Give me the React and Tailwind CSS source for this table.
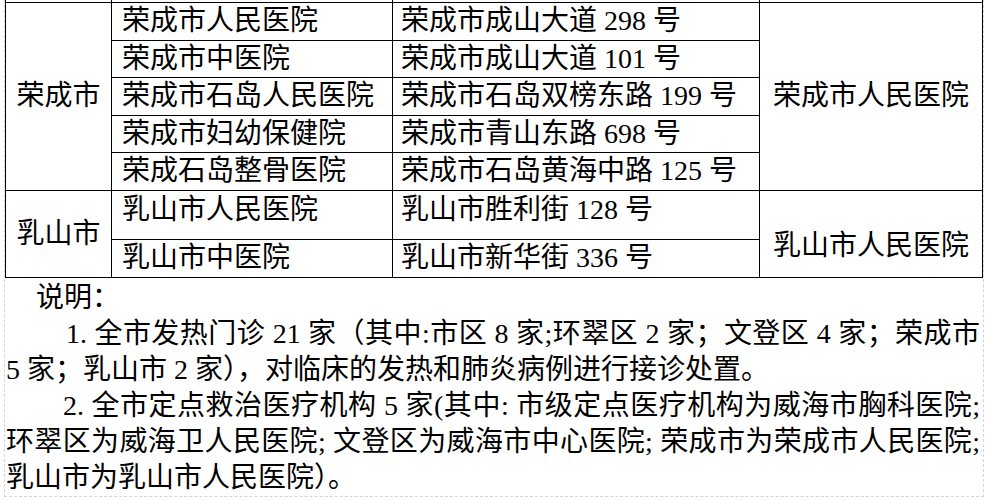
import React from 'react'

const font = { fontFamily: '"Liberation Serif", "Noto Sans CJK SC", serif' }

const rongcheng = [
  ['荣成市人民医院', '荣成市成山大道 298 号', 'h-[38px]'],
  ['荣成市中医院', '荣成市成山大道 101 号', 'h-[37px]'],
  ['荣成市石岛人民医院', '荣成市石岛双榜东路 199 号', 'h-[38px]'],
  ['荣成市妇幼保健院', '荣成市青山东路 698 号', 'h-[37px]'],
  ['荣成石岛整骨医院', '荣成市石岛黄海中路 125 号', 'h-[38px]'],
]

const cell = 'border border-black p-0 leading-[30px]'

export default function App() {
  return (
    <div className="bg-white w-[985px] h-[501px] overflow-hidden text-black" style={font}>
      <div className="ml-[4px] w-[980px] h-[497px] border-l border-r border-b border-dashed border-gray-300 text-[28px]">
        <table className="table-fixed border-collapse w-[977px]">
          <colgroup>
            <col className="w-[106px]" />
            <col className="w-[281px]" />
            <col className="w-[367px]" />
            <col className="w-[223px]" />
          </colgroup>
          <tbody>
            {/* clipped row from above */}
            <tr className="h-[2px]">
              <td className="border-x border-black p-0 h-[2px]"></td>
              <td className="border-x border-black p-0 h-[2px]"></td>
              <td className="border-x border-black p-0 h-[2px]"></td>
              <td className="border-x border-black p-0 h-[2px]"></td>
            </tr>
            {rongcheng.map(([name, addr, h], i) => (
              <tr key={name} className={h}>
                {i === 0 && (
                  <td rowSpan={5} className={`${cell} text-center align-middle`}>荣成市</td>
                )}
                <td className={`${cell} pl-[10px] align-middle whitespace-nowrap`}>{name}</td>
                <td className={`${cell} pl-[8px] align-middle whitespace-nowrap`}>{addr}</td>
                {i === 0 && (
                  <td rowSpan={5} className={`${cell} text-center align-middle whitespace-nowrap`}>荣成市人民医院</td>
                )}
              </tr>
            ))}
            <tr className="h-[49px]">
              <td rowSpan={2} className={`${cell} text-center align-middle`}>乳山市</td>
              <td className={`${cell} pl-[10px] pt-[4px] align-top whitespace-nowrap`}>乳山市人民医院</td>
              <td className={`${cell} pl-[8px] pt-[4px] align-top whitespace-nowrap`}>乳山市胜利街 128 号</td>
              <td rowSpan={2} className={`${cell} text-center pt-[40px] align-top whitespace-nowrap`}>乳山市人民医院</td>
            </tr>
            <tr className="h-[38px]">
              <td className={`${cell} pl-[10px] align-middle whitespace-nowrap`}>乳山市中医院</td>
              <td className={`${cell} pl-[8px] align-middle whitespace-nowrap`}>乳山市新华街 336 号</td>
            </tr>
          </tbody>
        </table>

        {/* notes */}
        <div className="mt-[2px] pl-[1px] w-[975px] leading-[36px] whitespace-nowrap">
          <div className="pl-[30px]">说明：</div>
          <div className="pl-[60px] text-justify [text-align-last:justify]">
            1. 全市发热门诊 21 家（其中:市区 8 家;环翠区 2 家；文登区 4 家；荣成市
          </div>
          <div>5 家；乳山市 2 家），对临床的发热和肺炎病例进行接诊处置。</div>
          <div className="pl-[57px] text-justify [text-align-last:justify]">
            2. 全市定点救治医疗机构 5 家(其中: 市级定点医疗机构为威海市胸科医院;
          </div>
          <div className="text-justify [text-align-last:justify]">
            环翠区为威海卫人民医院; 文登区为威海市中心医院; 荣成市为荣成市人民医院;
          </div>
          <div>乳山市为乳山市人民医院）。</div>
        </div>
      </div>
    </div>
  )
}
